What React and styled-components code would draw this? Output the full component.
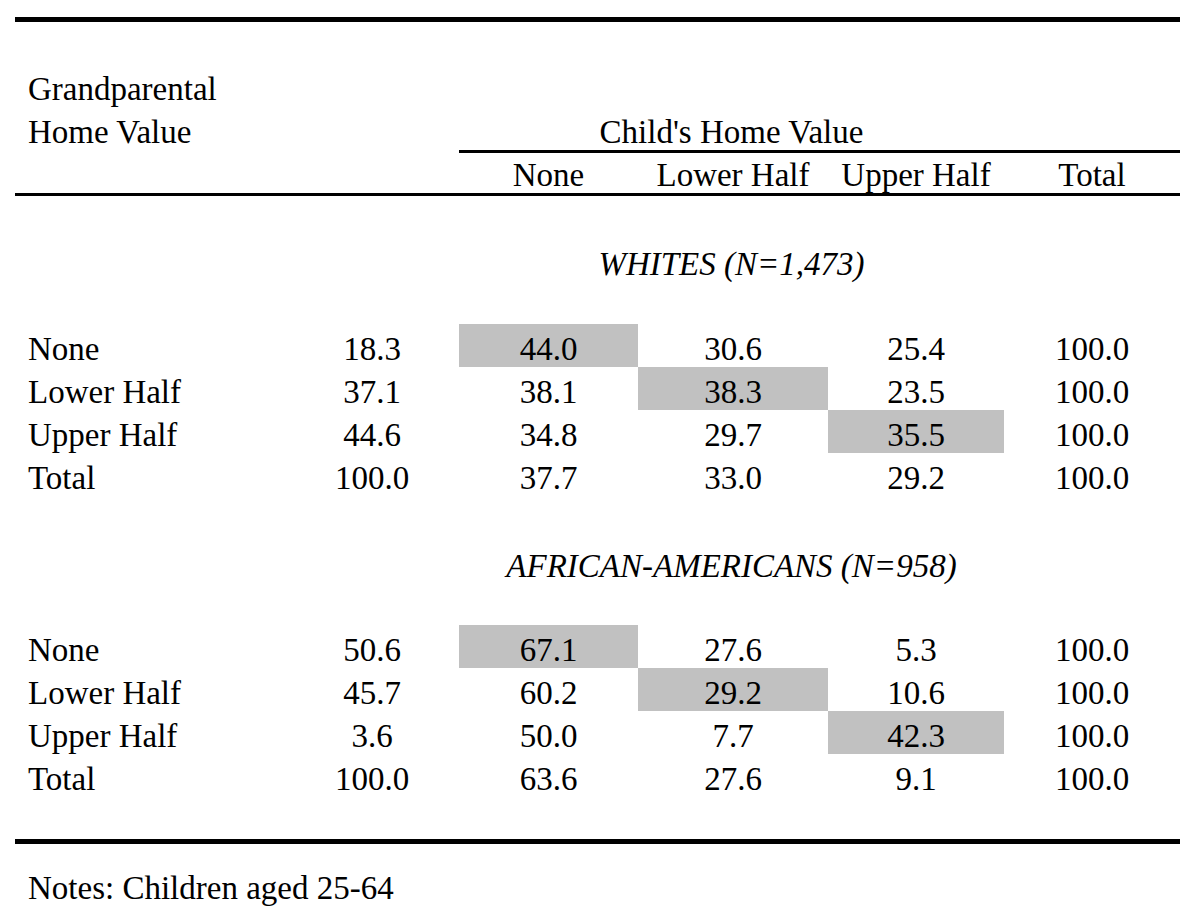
import React from 'react';
import styled, { createGlobalStyle } from 'styled-components';

// ---------------- Styled Components ----------------
const GlobalStyle = createGlobalStyle`
  body {
    margin: 0;
    background: #fff;
    color: #000;
    font-family: "Liberation Serif", "Times New Roman", serif;
  }
`;

const Page = styled.div`
  width: 1165px;
  padding: 17px 0 14px 15px;
  font-size: 33px;
`;

const Rule = styled.div`
  height: ${p => p.$weight}px;
  background: #000;
  margin-top: ${p => p.$top || 0}px;
  grid-column: ${p => p.$span || 'auto'};
`;

const Grid = styled.div`
  display: grid;
  grid-template-columns: 270px 174px 179px 190px 176px 176px;
  grid-auto-rows: 43px;
  margin-top: ${p => p.$top || 0}px;
`;

const HeadGrid = styled(Grid)`
  grid-template-rows: 43px 43px 3px 40px;
`;

const Cell = styled.div`
  display: flex;
  align-items: flex-end;
  justify-content: ${p => (p.$label ? 'flex-start' : 'center')};
  padding-left: ${p => (p.$label ? '13px' : '0')};
  line-height: 36px;
  white-space: nowrap;
  font-style: ${p => (p.$italic ? 'italic' : 'normal')};
  background: ${p => (p.$shaded ? '#c1c1c1' : 'transparent')};
  grid-column: ${p => p.$span || 'auto'};
`;

const Note = styled.p`
  margin: 19px 0 0;
  padding-left: 13px;
  height: 43px;
  line-height: 36px;
  display: flex;
  align-items: flex-end;
`;

// ---------------- Data ----------------
const rowLabels = ['None', 'Lower Half', 'Upper Half', 'Total'];

const groups = [
  {
    title: 'WHITES (N=1,473)',
    gap: [43, 42],
    rows: [
      ['18.3', '44.0', '30.6', '25.4', '100.0'],
      ['37.1', '38.1', '38.3', '23.5', '100.0'],
      ['44.6', '34.8', '29.7', '35.5', '100.0'],
      ['100.0', '37.7', '33.0', '29.2', '100.0'],
    ],
  },
  {
    title: 'AFRICAN-AMERICANS (N=958)',
    gap: [45, 41],
    rows: [
      ['50.6', '67.1', '27.6', '5.3', '100.0'],
      ['45.7', '60.2', '29.2', '10.6', '100.0'],
      ['3.6', '50.0', '7.7', '42.3', '100.0'],
      ['100.0', '63.6', '27.6', '9.1', '100.0'],
    ],
  },
];

// ---------------- Component ----------------
function Group({ title, gap, rows }) {
  return (
    <>
      <Grid $top={gap[0]}>
        <Cell $italic $span="3 / 6">{title}</Cell>
      </Grid>
      <Grid $top={gap[1]}>
        {rows.map((values, r) => (
          <React.Fragment key={r}>
            <Cell $label>{rowLabels[r]}</Cell>
            {values.map((v, c) => (
              // diagonal cells (same class as grandparents) are shaded
              <Cell key={c} $shaded={r < 3 && c === r + 1}>{v}</Cell>
            ))}
          </React.Fragment>
        ))}
      </Grid>
    </>
  );
}

export default function App() {
  return (
    <Page>
      <GlobalStyle />
      <Rule $weight={5} />

      <HeadGrid $top={42}>
        <Cell $label>Grandparental</Cell>
        <Cell $label $span="1">Home Value</Cell>
        <Cell $span="3 / 6">Child's Home Value</Cell>
        <Rule $weight={3} $span="3 / 7" />
        <Cell $span="3">None</Cell>
        <Cell>Lower Half</Cell>
        <Cell>Upper Half</Cell>
        <Cell>Total</Cell>
      </HeadGrid>
      <Rule $weight={3} />

      {groups.map(g => (
        <Group key={g.title} title={g.title} gap={g.gap} rows={g.rows} />
      ))}

      <Rule $weight={5} $top={42} />
      <Note>Notes: Children aged 25-64</Note>
    </Page>
  );
}
